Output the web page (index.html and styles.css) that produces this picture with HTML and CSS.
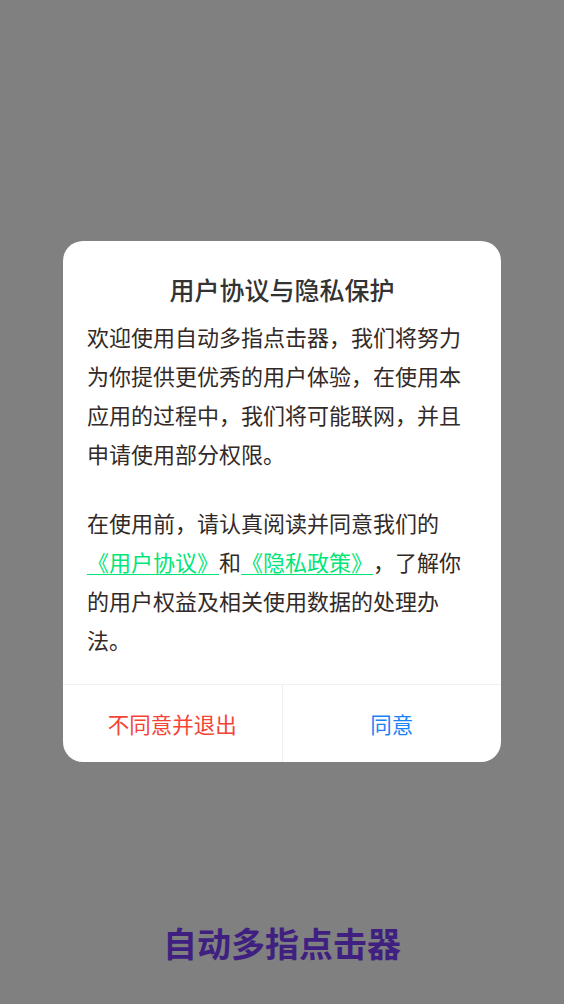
FILE: index.html
```html
<!DOCTYPE html>
<html lang="zh-CN">
<head>
<meta charset="utf-8">
<title>自动多指点击器</title>
<link rel="stylesheet" href="styles.css">
</head>
<body>
<div class="screen">
  <div class="dialog">
    <div class="dialog-title">用户协议与隐私保护</div>
    <div class="dialog-body">
      <p class="para">欢迎使用自动多指点击器，我们将努力为你提供更优秀的用户体验，在使用本应用的过程中，我们将可能联网，并且申请使用部分权限。</p>
      <p class="para para-second">在使用前，请认真阅读并同意我们的<a class="link" href="#">《用户协议》</a>和<a class="link" href="#">《隐私政策》</a>，了解你的用户权益及相关使用数据的处理办法。</p>
    </div>
    <div class="dialog-actions">
      <button class="btn btn-reject">不同意并退出</button>
      <button class="btn btn-agree">同意</button>
    </div>
  </div>
  <div class="app-name">自动多指点击器</div>
</div>
</body>
</html>
```
FILE: styles.css
```css
html, body {
  margin: 0;
  padding: 0;
}
body {
  background: #808080;
  font-family: "Noto Sans CJK SC", "Noto Sans", sans-serif;
  text-spacing-trim: space-all;
}
.screen {
  width: 564px;
  height: 1004px;
  display: flex;
  flex-direction: column;
  align-items: center;
  box-sizing: border-box;
  padding-top: 241px;
}
.dialog {
  width: 438px;
  background: #ffffff;
  border-radius: 20px;
  overflow: hidden;
}
.dialog-title {
  padding-top: 32px;
  font-size: 25px;
  line-height: 32px;
  font-weight: 500;
  color: #333333;
  text-align: center;
}
.dialog-body {
  padding: 12px 24px 25px 24px;
}
.para {
  margin: 0;
  font-size: 22px;
  line-height: 39px;
  color: #332a27;
  text-spacing-trim: space-all;
}
.para-second {
  margin-top: 30px;
}
.link {
  color: #00e676;
  text-decoration: underline;
  text-underline-offset: 3px;
  text-decoration-thickness: 1px;
}
.dialog-actions {
  display: flex;
  border-top: 1px solid #f0f0f0;
  height: 77px;
}
.btn {
  flex: 1;
  border: none;
  background: transparent;
  font-family: "Noto Sans CJK SC", "Noto Sans", sans-serif;
  font-size: 21.5px;
  padding: 0;
  margin: 0;
}
.btn-reject {
  color: #f44336;
  border-right: 1px solid #f0f0f0;
}
.btn-agree {
  color: #1a82f7;
}
.app-name {
  margin-top: auto;
  margin-bottom: 37px;
  font-size: 34px;
  line-height: 48px;
  font-weight: 700;
  color: #3f1f7f;
}
```
